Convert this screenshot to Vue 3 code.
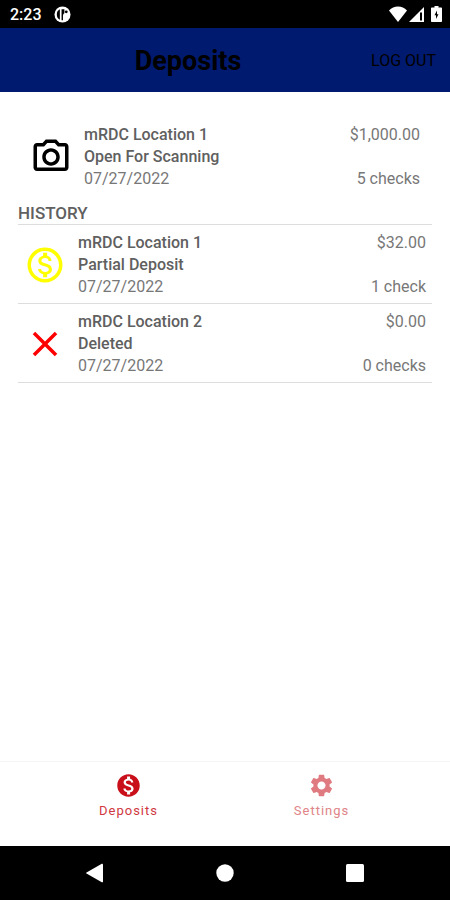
<template>
  <div class="app-page">
    <div class="status-bar">
      <span class="clock">2:23</span>
      <svg class="status-app" viewBox="0 0 18 18">
        <circle cx="9" cy="9" r="8.500" fill="#fff" />
        <path d="M6.200 3.500C4 4.500 3 6.500 3 9s1 4.500 3.200 5.500zM8 3.500h3v4.300c-1.200.6-1.500 1.700-1.500 3.700v3.500H8z" fill="#000" />
        <circle cx="13" cy="6.200" r="1.500" fill="#000" />
      </svg>
      <div class="status-icons">
        <svg class="wifi" viewBox="0 0 18 16">
          <path d="M9 16L0 4.500C2.500 1.600 5.500 0.500 9 0.500s6.500 1.100 9 4z" fill="#fff" />
        </svg>
        <svg class="signal" viewBox="0 0 15 15">
          <path d="M0 15L15 0v15z" fill="#fff" />
          <path d="M11 5.500h2v8h-2z" fill="#000" />
        </svg>
        <svg class="battery" viewBox="0 0 11 16">
          <path d="M3.500 0h4v1.500H10c.6 0 1 .4 1 1V15c0 .6-.4 1-1 1H1c-.6 0-1-.4-1-1V2.500c0-.6.4-1 1-1h2.500z" fill="#fff" />
          <path d="M6 4.500L3.500 9.200H5V13l2.500-4.700H6z" fill="#000" />
        </svg>
      </div>
    </div>

    <header class="app-header">
      <h1 class="title">Deposits</h1>
      <button class="logout">LOG OUT</button>
    </header>

    <main class="content">
      <section class="current">
        <div class="deposit">
          <svg class="deposit-icon" viewBox="0 0 24 24">
            <path :d="icons.camera" />
          </svg>
          <div class="info">
            <span class="strong">{{ current.location }}</span>
            <span class="strong">{{ current.status }}</span>
            <span>{{ current.date }}</span>
          </div>
          <div class="totals">
            <span>{{ current.amount }}</span>
            <span>{{ current.checks }}</span>
          </div>
        </div>
      </section>

      <h2 class="section-title">HISTORY</h2>
      <ul class="history">
        <li v-for="item in history" :key="item.id" class="deposit">
          <svg class="deposit-icon" :class="item.icon" viewBox="0 0 24 24">
            <path :d="icons[item.icon]" />
          </svg>
          <div class="info">
            <span class="strong">{{ item.location }}</span>
            <span class="strong">{{ item.status }}</span>
            <span>{{ item.date }}</span>
          </div>
          <div class="totals">
            <span>{{ item.amount }}</span>
            <span>{{ item.checks }}</span>
          </div>
        </li>
      </ul>
    </main>

    <nav class="tabs">
      <button
        v-for="tab in tabs"
        :key="tab.name"
        class="tab"
        :class="{ active: activeTab === tab.name }"
        @click="activeTab = tab.name"
      >
        <svg class="tab-icon" viewBox="0 0 24 24">
          <path :d="icons[tab.icon]" />
        </svg>
        <span>{{ tab.name }}</span>
      </button>
    </nav>

    <div class="system-bar">
      <button class="system-button" aria-label="Back">
        <svg viewBox="0 0 20 20" fill="#fff"><path d="M18 1.500v17c0 .8-.6 1-1.200.7L1.500 10.600c-.5-.3-.5-.9 0-1.200L16.800.8c.6-.3 1.200-.1 1.200.7z" /></svg>
      </button>
      <button class="system-button" aria-label="Home">
        <svg viewBox="0 0 20 20" fill="#fff"><circle cx="10" cy="10" r="8.700" /></svg>
      </button>
      <button class="system-button" aria-label="Recent apps">
        <svg viewBox="0 0 20 20" fill="#fff"><rect x="1" y="1" width="18" height="18" rx="1.500" /></svg>
      </button>
    </div>
  </div>
</template>

<script setup>
import { ref } from 'vue'

const activeTab = ref('Deposits')

const tabs = [
  { name: 'Deposits', icon: 'coin' },
  { name: 'Settings', icon: 'gear' }
]

const current = {
  location: 'mRDC Location 1',
  status: 'Open For Scanning',
  date: '07/27/2022',
  amount: '$1,000.00',
  checks: '5 checks'
}

const history = ref([
  {
    id: 1,
    icon: 'dollar',
    location: 'mRDC Location 1',
    status: 'Partial Deposit',
    date: '07/27/2022',
    amount: '$32.00',
    checks: '1 check'
  },
  {
    id: 2,
    icon: 'close',
    location: 'mRDC Location 2',
    status: 'Deleted',
    date: '07/27/2022',
    amount: '$0.00',
    checks: '0 checks'
  }
])

const icons = {
  camera: 'M14.120 4l1.830 2H20v12H4V6h4.050l1.830-2h4.240M15 2H9L7.170 4H4c-1.100 0-2 .9-2 2v12c0 1.100.9 2 2 2h16c1.100 0 2-.9 2-2V6c0-1.100-.9-2-2-2h-3.170L15 2zm-3 7c1.650 0 3 1.350 3 3s-1.350 3-3 3-3-1.350-3-3 1.350-3 3-3m0-2c-2.760 0-5 2.240-5 5s2.240 5 5 5 5-2.240 5-5-2.240-5-5-5z',
  dollar: 'M12 2C6.480 2 2 6.480 2 12s4.480 10 10 10 10-4.480 10-10S17.520 2 12 2zm0 18c-4.410 0-8-3.590-8-8s3.590-8 8-8 8 3.590 8 8-3.590 8-8 8zm.310-8.860c-1.770-.450-2.340-.940-2.340-1.670 0-.840.790-1.430 2.100-1.430 1.380 0 1.900.660 1.940 1.640h1.710c-.050-1.340-.870-2.570-2.490-2.970V5H10.900v1.690c-1.510.320-2.720 1.300-2.720 2.810 0 1.790 1.490 2.690 3.660 3.210 1.950.460 2.340 1.150 2.340 1.870 0 .530-.390 1.390-2.100 1.390-1.600 0-2.230-.720-2.320-1.640H8.040c.1 1.700 1.360 2.660 2.860 2.970V19h2.340v-1.670c1.520-.290 2.720-1.160 2.730-2.770-.010-2.200-1.900-2.960-3.660-3.420z',
  coin: 'M12 2C6.480 2 2 6.480 2 12s4.480 10 10 10 10-4.480 10-10S17.520 2 12 2zm1.410 16.090V20h-2.670v-1.930c-1.710-.360-3.160-1.460-3.270-3.400h1.960c.1 1.050.820 1.870 2.650 1.870 1.960 0 2.400-.980 2.400-1.590 0-.830-.440-1.610-2.670-2.140-2.480-.6-4.180-1.620-4.180-3.670 0-1.720 1.390-2.840 3.110-3.210V4h2.670v1.950c1.860.450 2.790 1.860 2.850 3.390H14.300c-.050-1.110-.640-1.870-2.220-1.870-1.500 0-2.400.680-2.400 1.640 0 .840.650 1.390 2.670 1.910s4.180 1.390 4.180 3.910c-.010 1.830-1.380 2.830-3.120 3.160z',
  close: 'M19 6.410L17.590 5 12 10.590 6.410 5 5 6.410 10.590 12 5 17.590 6.410 19 12 13.410 17.590 19 19 17.590 13.410 12z',
  gear: 'M19.140 12.940c.040-.3.060-.610.060-.940 0-.320-.020-.640-.070-.940l2.030-1.580c.180-.140.230-.410.120-.610l-1.920-3.320c-.120-.220-.370-.290-.590-.220l-2.390.960c-.5-.380-1.030-.7-1.620-.940l-.360-2.540c-.040-.240-.240-.410-.480-.410h-3.840c-.240 0-.430.170-.470.410l-.360 2.540c-.590.240-1.130.570-1.620.940l-2.390-.960c-.220-.080-.470 0-.590.220L2.740 8.870c-.120.210-.080.470.120.610l2.030 1.580c-.050.3-.090.630-.090.940s.020.640.070.940l-2.030 1.580c-.180.140-.230.410-.120.610l1.920 3.320c.120.220.370.290.590.220l2.390-.960c.5.380 1.030.7 1.620.940l.360 2.540c.050.240.240.410.480.410h3.840c.240 0 .440-.170.470-.410l.360-2.540c.590-.240 1.130-.560 1.620-.940l2.390.960c.220.080.470 0 .590-.220l1.920-3.320c.120-.220.070-.470-.120-.610l-2.010-1.580zM12 15.600c-1.980 0-3.600-1.620-3.600-3.600s1.620-3.600 3.600-3.600 3.600 1.620 3.600 3.600-1.620 3.600-3.600 3.600z'
}
</script>

<style>
body {
  margin: 0;
  background: #fff;
}
</style>

<style scoped>
.app-page {
  display: flex;
  flex-direction: column;
  min-height: 100vh;
  background: #fff;
  color: #777;
  font-family: Roboto, "Liberation Sans", sans-serif;
  font-size: 16px;
}

button {
  padding: 0;
  border: none;
  background: none;
  font-family: inherit;
  cursor: pointer;
}

svg {
  display: block;
}

.status-bar {
  display: flex;
  align-items: center;
  gap: 12px;
  height: 28px;
  padding: 0 8px 0 10px;
  background: #000;
  color: #fff;
}

.clock {
  font-size: 16px;
  font-weight: 500;
}

.status-app {
  width: 17px;
  height: 17px;
}

.status-icons {
  display: flex;
  align-items: center;
  gap: 2px;
  margin-left: auto;
}

.wifi {
  width: 18px;
  height: 16px;
}

.signal {
  width: 15px;
  height: 15px;
}

.battery {
  width: 11px;
  height: 16px;
  margin-left: 5px;
}

.app-header {
  display: grid;
  grid-template-columns: 1fr auto 1fr;
  align-items: center;
  height: 64px;
  padding: 0 14px 0 0;
  background: #001a70;
  color: #000;
}

.title {
  grid-column: 2;
  margin: 2px 60px 0 0;
  font-size: 27px;
  font-weight: 700;
  line-height: 32px;
}

.logout {
  justify-self: end;
  color: #000;
  font-size: 16px;
}

.content {
  flex: 1;
  padding: 32px 18px 0;
}

.current {
  padding: 0 6px;
}

.deposit {
  display: flex;
  align-items: center;
  gap: 12px;
  padding: 0 6px;
  line-height: 22px;
}

.deposit-icon {
  flex: none;
  width: 42px;
  height: 42px;
}

.deposit-icon.dollar {
  fill: #ff0;
}

.deposit-icon.close {
  fill: #f00;
}

.info {
  display: flex;
  flex: 1;
  flex-direction: column;
}

.strong {
  color: #606060;
  font-weight: 500;
}

.totals {
  display: flex;
  flex-direction: column;
  align-self: stretch;
  justify-content: space-between;
  text-align: right;
}

.section-title {
  margin: 12px 0 0;
  color: #606060;
  font-size: 17px;
  font-weight: 500;
  line-height: 22px;
}

.history {
  margin: 0;
  padding: 0;
  border-top: 1px solid #ddd;
  list-style: none;
}

.history .deposit {
  padding: 7px 6px 5px;
  border-bottom: 1px solid #ddd;
}

.tabs {
  display: flex;
  height: 84px;
  padding: 0 32px;
  border-top: 1px solid #f5f5f5;
}

.tab {
  display: flex;
  flex: 1;
  flex-direction: column;
  align-items: center;
  gap: 4px;
  padding-top: 10px;
  color: #e08488;
  font-size: 13px;
  line-height: 16px;
  letter-spacing: 1px;
}

.tab.active {
  color: #d0393f;
}

.tab-icon {
  width: 27px;
  height: 27px;
  fill: #df7b80;
}

.tab.active .tab-icon {
  fill: #c9101a;
}

.system-bar {
  display: flex;
  align-items: center;
  height: 54px;
  padding: 0 30px;
  background: #000;
}

.system-button {
  display: flex;
  flex: 1;
  justify-content: center;
}

.system-button svg {
  width: 20px;
  height: 20px;
}
</style>
